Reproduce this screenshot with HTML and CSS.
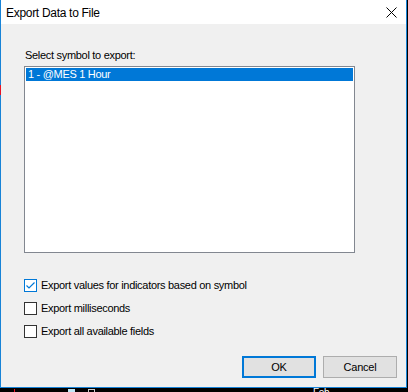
FILE: index.html
```html
<!DOCTYPE html>
<html lang="en">
<head>
    <meta charset="UTF-8">
    <title>Export Data to File</title>
    <link rel="stylesheet" href="styles.css">
</head>
<body>
    <div class="window">
        <div class="titlebar">
            <span class="title">Export Data to File</span>
            <svg class="close" width="11" height="11" viewBox="0 0 11 11">
                <path d="M0.5 0.5 L10.5 10.5 M10.5 0.5 L0.5 10.5" stroke="#000" stroke-width="1" fill="none"/>
            </svg>
        </div>

        <div class="content">
            <div class="caption">Select symbol to export:</div>
            <div class="listbox">
                <div class="list-item selected">1 - @MES 1 Hour</div>
            </div>

            <div class="options">
                <label class="check-row">
                    <span class="check checked">
                        <svg width="11" height="11" viewBox="0 0 11 11">
                            <path d="M1.5 5.5 L4 8 L9.5 2.5" stroke="#0078d7" stroke-width="1.2" fill="none"/>
                        </svg>
                    </span>
                    <span>Export values for indicators based on symbol</span>
                </label>
                <label class="check-row">
                    <span class="check"></span>
                    <span>Export milliseconds</span>
                </label>
                <label class="check-row">
                    <span class="check"></span>
                    <span>Export all available fields</span>
                </label>
            </div>

            <div class="buttons">
                <button class="btn default">OK</button>
                <button class="btn">Cancel</button>
            </div>
        </div>
    </div>

    <!-- bits of the app behind the dialog -->
    <div class="behind red-mark"></div>
    <div class="behind taskbar">
        <span class="tick"></span>
        <span class="chip"></span>
        <span class="glyph"></span>
        <span class="feb">Feb</span>
    </div>
</body>
</html>
```

FILE: styles.css
```css
* {
    margin: 0;
    padding: 0;
    box-sizing: border-box;
}

body {
    background: #000;
    font-family: 'Liberation Sans', Arial, sans-serif;
    font-size: 11px;
    letter-spacing: -0.3px;
    color: #000;
    position: relative;
    width: 408px;
    height: 392px;
    overflow: hidden;
}

.window {
    width: 407px;
    height: 388px;
    background: #f0f0f0;
    border: 1px solid #1883d7;
    border-top: none;
    display: flex;
    flex-direction: column;
}

.titlebar {
    height: 24px;
    background: #fff;
    display: flex;
    align-items: center;
    justify-content: space-between;
    padding: 0 9px 0 5px;
}

.title {
    font-size: 12px;
    letter-spacing: -0.3px;
    padding-top: 1px;
}

.close {
    display: block;
    margin-top: 1px;
}

.content {
    padding: 25px 0 0 23px;
    flex: 1;
    display: flex;
    flex-direction: column;
}

.caption {
    height: 13px;
    line-height: 13px;
    padding-left: 1px;
    margin-bottom: 4px;
}

.listbox {
    width: 331px;
    height: 187px;
    background: #fff;
    border: 1px solid #828790;
    padding: 1px;
}

.list-item {
    height: 13px;
    line-height: 13px;
    padding-left: 2px;
}

.list-item.selected {
    background: #0078d7;
    color: #fff;
}

.options {
    margin-top: 26px;
    display: flex;
    flex-direction: column;
    gap: 10px;
}

.check-row {
    display: flex;
    align-items: center;
    gap: 4px;
    height: 13px;
    line-height: 13px;
}

.check {
    width: 13px;
    height: 13px;
    border: 1px solid #333;
    background: #fff;
    display: flex;
    align-items: center;
    justify-content: center;
}

.check.checked {
    border-color: #0078d7;
}

.check svg {
    display: block;
}

.buttons {
    margin-top: 18px;
    display: flex;
    justify-content: flex-end;
    gap: 7px;
    padding-right: 9px;
}

.btn {
    width: 74px;
    height: 22px;
    background: #e1e1e1;
    border: 1px solid #adadad;
    font-family: 'Liberation Sans', Arial, sans-serif;
    font-size: 11px;
    letter-spacing: -0.2px;
    color: #000;
}

.btn.default {
    border: 2px solid #0078d7;
}

.behind {
    position: absolute;
}

.red-mark {
    left: 0;
    top: 85px;
    width: 1px;
    height: 10px;
    background: #e81123;
}

.taskbar {
    left: 0;
    top: 388px;
    width: 408px;
    height: 4px;
    overflow: hidden;
}

.taskbar span {
    position: absolute;
}

.tick {
    left: 14px;
    top: 1px;
    width: 1px;
    height: 3px;
    background: #e81123;
}

.chip {
    left: 68px;
    top: 1px;
    width: 7px;
    height: 3px;
    background: #bfe6f5;
}

.glyph {
    left: 88px;
    top: 1px;
    width: 7px;
    height: 3px;
    border-top: 1px solid #ccc;
    border-left: 1px solid #ccc;
    border-right: 1px solid #ccc;
}

.feb {
    left: 313px;
    top: 0;
    color: #fff;
    font-size: 10px;
    line-height: 10px;
}
```
